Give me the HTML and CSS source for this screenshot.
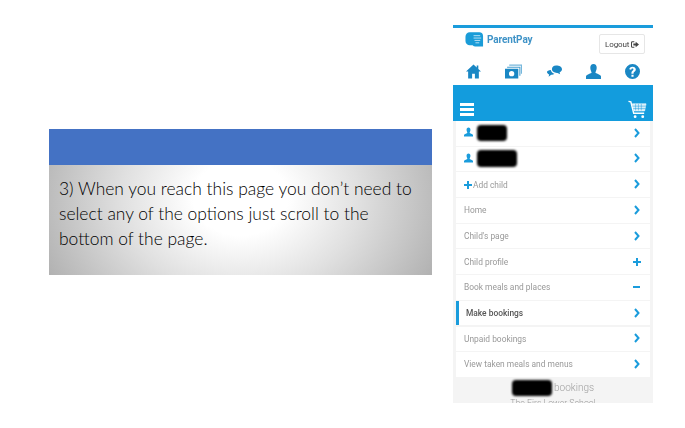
FILE: index.html
```html
<!DOCTYPE html>
<html lang="en">
<head>
    <meta charset="UTF-8">
    <meta name="viewport" content="width=device-width, initial-scale=1.0">
    <title>ParentPay step 3</title>
    <link rel="stylesheet" href="styles.css">
</head>
<body>
    <div class="slide">
        <div class="callout">
            <div class="callout-head"></div>
            <p class="callout-body">3) When you reach this page you don’t need to select any of the options just scroll to the bottom of the page.</p>
        </div>

        <div class="phone">
            <div class="brand-row">
                <div class="brand">
                    <svg class="brand-logo" viewBox="0 0 20 16"><path d="M5 1h10a4 4 0 0 1 4 4v11h-8a4 4 0 0 1-3-1.500H5a4.500 4.500 0 0 1-4.500-4.500V5.500A4.500 4.500 0 0 1 5 1z" fill="#1a9cd8"/><path d="M9 4.500h7M9 7h8M10 9.500h6M11 12h4" stroke="#bfe3f5" stroke-width="1"/></svg>
                    <span class="brand-name">ParentPay</span>
                </div>
                <button class="logout">Logout
                    <svg class="logout-icon" viewBox="0 0 12 10"><path d="M5 0H2a2 2 0 0 0-2 2v6a2 2 0 0 0 2 2h3V8.500H2.500a1 1 0 0 1-1-1v-5a1 1 0 0 1 1-1H5z" fill="#444"/><path d="M3.500 3.500H7V1l5 4-5 4V6.500H3.500z" fill="#444"/></svg>
                </button>
            </div>

            <div class="icon-row">
                <svg class="nav-icon" viewBox="0 0 14 14"><path d="M7 .5 0 7h2v6.500h3.700V9h2.600v4.500H12V7h2l-2.500-2.300V1.500H10v1.800z"/></svg>
                <svg class="nav-icon nav-money" viewBox="0 0 16 14"><path d="M4 .5h12v8.500h-1V1.500H4z" opacity=".6"/><path d="M2 2.500h12.500v8.500h-1V3.500H2z" opacity=".8"/><path fill-rule="evenodd" d="M0 4.500h12.500v9H0zm6.250 2a2.500 2.500 0 1 0 0 5 2.500 2.500 0 0 0 0-5z"/></svg>
                <svg class="nav-icon" viewBox="0 0 14 12"><path d="M8.500 .5C11.700 .5 14 2 14 4c0 1.300-.9 2.300-2.300 2.900l.6 1.600-2.500-1.200C6.800 7.500 4.600 6 4.600 4c0-2 1.500-3.500 3.900-3.500z"/><path d="M3.600 4.500c.2 1.700 1.500 3 3.300 3.500-.7.700-1.800 1.100-3 1.100L1.500 11 2 8.700C.7 8.200 0 7.400 0 6.500 0 5.500 1.500 4.500 3.600 4.500z"/></svg>
                <svg class="nav-icon" viewBox="0 0 14 14"><path d="M7 0c2 0 3 1.500 3 3.500S9 7 8.800 8c0 1 4.700 1.500 5.200 3.500V14H0v-2.500C.5 9.500 5.200 9 5.200 8 5 7 4 5.500 4 3.500S5 0 7 0z"/></svg>
                <svg class="nav-icon" viewBox="0 0 14 14"><path fill-rule="evenodd" d="M7 0a7 7 0 1 1 0 14A7 7 0 0 1 7 0zM6 10v2h2v-2zM7 2.500C5.300 2.500 4.200 3.400 4 5l1.800.3c.1-.8.500-1.200 1.100-1.200.6 0 1 .4 1 .9 0 .5-.3.8-.9 1.300C6.300 6.900 6 7.500 6 8.500v.6h2v-.4c0-.6.200-.9.900-1.400.8-.6 1.200-1.300 1.200-2.200 0-1.600-1.300-2.600-3.100-2.600z"/></svg>
            </div>

            <div class="menu-bar">
                <div class="burger"><span></span><span></span><span></span></div>
                <svg class="cart" viewBox="0 0 20 20"><path d="M.5 1.500 3 2l3 12h11" fill="none" stroke="#fff" stroke-width="1.500"/><path d="M4.500 4H19l-1.500 7.500H6.300z" fill="#d5eef9" stroke="#fff" stroke-width=".6"/><path d="M8 4v7M11 4v7M14 4v7M5 6.500h14M5.500 9h13" stroke="#1a9cdc" stroke-width=".5"/><circle cx="7.500" cy="17.500" r="1.500" fill="#fff"/><circle cx="15.500" cy="17.500" r="1.500" fill="#fff"/></svg>
            </div>

            <div class="menu-list">
                <div class="row">
                    <span class="row-label">
                        <svg class="row-user" viewBox="0 0 14 14"><path d="M7 0c2 0 3 1.500 3 3.500S9 7 8.800 8c0 1 4.700 1.500 5.200 3.500V14H0v-2.500C.5 9.500 5.200 9 5.200 8 5 7 4 5.500 4 3.500S5 0 7 0z"/></svg>
                        <span class="redact redact-short"></span>
                    </span>
                    <svg class="chevron" viewBox="0 0 6 10"><path d="M1 1l3.500 4L1 9" /></svg>
                </div>
                <div class="row">
                    <span class="row-label">
                        <svg class="row-user" viewBox="0 0 14 14"><path d="M7 0c2 0 3 1.500 3 3.500S9 7 8.800 8c0 1 4.700 1.500 5.200 3.500V14H0v-2.500C.5 9.500 5.200 9 5.200 8 5 7 4 5.500 4 3.500S5 0 7 0z"/></svg>
                        <span class="redact redact-long"></span>
                    </span>
                    <svg class="chevron" viewBox="0 0 6 10"><path d="M1 1l3.500 4L1 9" /></svg>
                </div>
                <div class="row">
                    <span class="row-label add-child">
                        <svg class="row-plus" viewBox="0 0 8 8"><path d="M3 0h2v3h3v2H5v3H3V5H0V3h3z"/></svg>Add child
                    </span>
                    <svg class="chevron" viewBox="0 0 6 10"><path d="M1 1l3.500 4L1 9" /></svg>
                </div>
                <div class="row">
                    <span class="row-label">Home</span>
                    <svg class="chevron" viewBox="0 0 6 10"><path d="M1 1l3.500 4L1 9" /></svg>
                </div>
                <div class="row">
                    <span class="row-label">Child's page</span>
                    <svg class="chevron" viewBox="0 0 6 10"><path d="M1 1l3.500 4L1 9" /></svg>
                </div>
                <div class="row">
                    <span class="row-label">Child profile</span>
                    <svg class="row-plus row-plus-end" viewBox="0 0 8 8"><path d="M3 0h2v3h3v2H5v3H3V5H0V3h3z"/></svg>
                </div>
                <div class="row">
                    <span class="row-label">Book meals and places</span>
                    <span class="minus"></span>
                </div>
                <div class="row row-active">
                    <span class="row-label">Make bookings</span>
                    <svg class="chevron" viewBox="0 0 6 10"><path d="M1 1l3.500 4L1 9" /></svg>
                </div>
                <div class="row">
                    <span class="row-label">Unpaid bookings</span>
                    <svg class="chevron" viewBox="0 0 6 10"><path d="M1 1l3.500 4L1 9" /></svg>
                </div>
                <div class="row">
                    <span class="row-label">View taken meals and menus</span>
                    <svg class="chevron" viewBox="0 0 6 10"><path d="M1 1l3.500 4L1 9" /></svg>
                </div>
            </div>

            <div class="page-title">
                <div class="title-line"><span class="redact redact-title"></span><span>bookings</span></div>
                <div class="school">The Firs Lower School</div>
            </div>
        </div>
    </div>
</body>
</html>
```

FILE: styles.css
```css
body {
    margin: 0;
    background: white;
    font-family: Roboto, Arial, sans-serif;
}
.slide {
    display: flex;
    align-items: flex-start;
    width: 685px;
    height: 428px;
    overflow: hidden;
}

/* left text box */
.callout {
    width: 383px;
    margin: 129px 0 0 49px;
    flex-shrink: 0;
}
.callout-head {
    height: 36px;
    background: #4472c4;
}
.callout-body {
    height: 110px;
    box-sizing: border-box;
    margin: 0;
    padding: 11px 10px 0;
    background: radial-gradient(ellipse 62% 170% at 50% 30%, #fff 20%, #e0e0e0 50%, #a6a6a6 100%);
    font-family: Lato, Arial, sans-serif;
    font-weight: 300;
    font-size: 17.45px;
    line-height: 25px;
    color: #000;
}

/* phone screenshot */
.phone {
    width: 200px;
    height: 378px;
    box-sizing: border-box;
    margin: 25px 0 0 21px;
    border-top: 3px solid #1a9cdc;
    background: #f4f4f4;
    overflow: hidden;
    flex-shrink: 0;
    filter: blur(0.35px);
}
.brand-row {
    display: flex;
    justify-content: space-between;
    align-items: flex-start;
    box-sizing: border-box;
    height: 29px;
    padding: 3px 8px 0 12px;
    background: white;
}
.brand {
    display: flex;
    align-items: center;
    gap: 3px;
}
.brand-logo {
    width: 19px;
    height: 16px;
}
.brand-name {
    font-size: 10px;
    font-weight: 700;
    letter-spacing: -0.1px;
    color: #3f93c7;
}
.logout {
    display: flex;
    align-items: center;
    gap: 2px;
    width: 46px;
    height: 20px;
    margin-top: 3px;
    padding: 0 0 0 5px;
    border: 1px solid #e6e6e6;
    border-radius: 2px;
    background: white;
    font-family: Roboto, Arial, sans-serif;
    font-size: 8px;
    letter-spacing: -0.1px;
    color: #444;
}
.logout-icon {
    width: 8px;
    height: 7px;
}
.icon-row {
    display: flex;
    justify-content: space-between;
    align-items: center;
    height: 28px;
    padding: 0 13px;
    background: white;
}
.nav-icon {
    width: 15px;
    height: 15px;
    fill: #1a87c4;
}
.nav-money {
    width: 17px;
}
.menu-bar {
    display: flex;
    justify-content: space-between;
    align-items: flex-end;
    height: 36px;
    padding: 0 6px 1px 7px;
    box-sizing: border-box;
    background: #139cdd;
}
.burger {
    display: flex;
    flex-direction: column;
    gap: 2px;
    width: 14px;
    margin-bottom: 4px;
}
.burger span {
    height: 3px;
    background: white;
}
.cart {
    width: 19px;
    height: 21px;
}

/* list */
.menu-list {
    display: flex;
    flex-direction: column;
    gap: 1.1px;
    padding: 0 3px;
}
.row {
    display: flex;
    justify-content: space-between;
    align-items: center;
    height: 24.6px;
    padding: 0 10px 0 8px;
    background: white;
    font-size: 8.4px;
    color: #999;
}
.row-label {
    display: flex;
    align-items: center;
}
.row-user {
    width: 9px;
    height: 10px;
    margin: -2px 4px 0 0;
    fill: #1a9cdc;
}
.row-plus {
    width: 8px;
    height: 8px;
    fill: #1a9cdc;
}
.add-child .row-plus {
    margin-right: 1px;
}
.row-plus-end {
    margin-right: -1px;
}
.chevron {
    width: 6px;
    height: 10px;
    margin-top: -1px;
    fill: none;
    stroke: #1a9cdc;
    stroke-width: 2;
}
.minus {
    width: 7px;
    height: 2px;
    background: #1a9cdc;
}
.row-active {
    padding-left: 7px;
    border-left: 3px solid #1a9cdc;
    font-weight: 500;
    color: #555;
}
.redact {
    display: block;
    background: black;
    border-radius: 4px;
    filter: blur(1px);
}
.redact-short {
    width: 30px;
    height: 16px;
}
.redact-long {
    width: 40px;
    height: 17px;
}

/* heading under the list, cut off by the screenshot edge */
.page-title {
    text-align: center;
    color: #a0a0a0;
    background: #f4f4f4;
}
.title-line {
    display: flex;
    justify-content: center;
    align-items: center;
    gap: 2px;
    height: 20px;
    margin-top: 1px;
    font-size: 10px;
    font-weight: 300;
}
.redact-title {
    width: 40px;
    height: 16px;
}
.school {
    font-size: 8.8px;
    font-weight: 300;
    color: #999;
}
```
